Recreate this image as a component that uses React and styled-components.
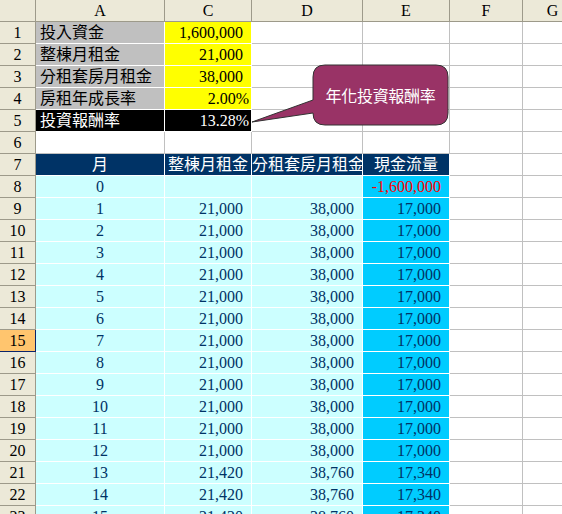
import React from "react";
import styled, { createGlobalStyle, css } from "styled-components";

const GlobalStyle = createGlobalStyle`
  html, body {
    margin: 0;
    padding: 0;
    background: #fff;
    overflow: hidden;
  }
  body {
    width: 562px;
    height: 514px;
  }
`;

const COLS = [
  { key: "A", width: 129 },
  { key: "C", width: 87 },
  { key: "D", width: 111 },
  { key: "E", width: 87 },
  { key: "F", width: 73 },
  { key: "G", width: 60 },
];

const inputs = [
  { n: 1, label: "投入資金", value: "1,600,000" },
  { n: 2, label: "整棟月租金", value: "21,000" },
  { n: 3, label: "分租套房月租金", value: "38,000" },
  { n: 4, label: "房租年成長率", value: "2.00%", pct: true },
];

const monthRows = [];
for (let m = 0; m <= 16; m++) {
  const grown = m > 12;
  monthRows.push({
    n: m + 8,
    month: m,
    whole: m === 0 ? "" : grown ? "21,420" : "21,000",
    split: m === 0 ? "" : grown ? "38,760" : "38,000",
    flow: m === 0 ? "-1,600,000" : grown ? "17,340" : "17,000",
  });
}

const Sheet = styled.div`
  position: relative;
  width: 562px;
  height: 514px;
  overflow: hidden;
  display: grid;
  grid-template-columns: 36px ${COLS.map(c => c.width + "px").join(" ")};
  grid-auto-rows: 22px;
  font-family: "Liberation Serif", "Noto Sans CJK TC", serif;
  font-size: 16px;
`;

const HeadCell = styled.div`
  box-sizing: border-box;
  background: #ece9d8;
  border-right: 1px solid #9d9a8a;
  border-bottom: 1px solid #9d9a8a;
  display: flex;
  align-items: center;
  justify-content: center;
  color: #000;
  line-height: 1;
  ${p =>
    p.$active &&
    css`
      background: #ffc56e;
      border-right-color: #0a246a;
      border-bottom-color: #0a246a;
    `}
`;

const Cell = styled.div`
  box-sizing: border-box;
  background: ${p => p.$fill || "#fff"};
  color: ${p => p.$ink || "#000"};
  border-right: 1px solid ${p => (p.$fill ? "#fff" : "#c0c0c0")};
  border-bottom: 1px solid ${p => (p.$fill ? "#fff" : "#c0c0c0")};
  display: flex;
  align-items: center;
  justify-content: ${p =>
    p.$align === "right" ? "flex-end" : p.$align === "center" ? "center" : "flex-start"};
  padding: 0 ${p => p.$padR ?? 0}px 0 ${p => p.$padL ?? 0}px;
  white-space: nowrap;
  overflow: hidden;
  line-height: 1;
`;

const Callout = styled.div`
  position: absolute;
  left: 250px;
  top: 60px;
  width: 202px;
  height: 70px;
`;

const CalloutShape = styled.svg`
  position: absolute;
  inset: 0;
`;

const CalloutText = styled.span`
  position: absolute;
  left: 63px;
  top: 5px;
  width: 135px;
  height: 60px;
  display: flex;
  align-items: center;
  justify-content: center;
  color: #fff;
  font-family: "Noto Sans CJK TC", sans-serif;
  font-size: 16px;
  letter-spacing: -0.3px;
`;

const NAVY = "#003366";
const AQUA = "#ccffff";
const SKY = "#00ccff";

const App = () => {
  return (
    <>
      <GlobalStyle />
      <Sheet>
        <HeadCell />
        {COLS.map(c => (
          <HeadCell key={c.key}>{c.key}</HeadCell>
        ))}

        {inputs.map(r => (
          <React.Fragment key={r.n}>
            <HeadCell>{r.n}</HeadCell>
            <Cell $fill="#c0c0c0" $padL={4}>
              {r.label}
            </Cell>
            <Cell $fill="#ffff00" $align="right" $padR={r.pct ? 2 : 8}>
              {r.value}
            </Cell>
            <Cell />
            <Cell />
            <Cell />
            <Cell />
          </React.Fragment>
        ))}

        <HeadCell>5</HeadCell>
        <Cell $fill="#000" $ink="#fff" $padL={4}>
          投資報酬率
        </Cell>
        <Cell $fill="#000" $ink="#fff" $align="right" $padR={2}>
          13.28%
        </Cell>
        <Cell />
        <Cell />
        <Cell />
        <Cell />

        <HeadCell>6</HeadCell>
        {COLS.map(c => (
          <Cell key={c.key} />
        ))}

        <HeadCell>7</HeadCell>
        <Cell $fill={NAVY} $ink="#fff" $align="center">
          月
        </Cell>
        <Cell $fill={NAVY} $ink="#fff" $align="center">
          整棟月租金
        </Cell>
        <Cell $fill={NAVY} $ink="#fff">
          分租套房月租金
        </Cell>
        <Cell $fill={NAVY} $ink="#fff" $align="center">
          現金流量
        </Cell>
        <Cell />
        <Cell />

        {monthRows.map(r => (
          <React.Fragment key={r.n}>
            <HeadCell $active={r.n === 15}>{r.n}</HeadCell>
            <Cell $fill={AQUA} $ink={NAVY} $align="center">
              {r.month}
            </Cell>
            <Cell $fill={AQUA} $ink={NAVY} $align="right" $padR={8}>
              {r.whole}
            </Cell>
            <Cell $fill={AQUA} $ink={NAVY} $align="right" $padR={8}>
              {r.split}
            </Cell>
            <Cell
              $fill={SKY}
              $ink={r.month === 0 ? "#ff0000" : NAVY}
              $align="right"
              $padR={8}
            >
              {r.flow}
            </Cell>
            <Cell />
            <Cell />
          </React.Fragment>
        ))}

        <Callout>
          <CalloutShape width="202" height="70" viewBox="0 0 202 70">
            <path
              d="M75 5 H186 Q198 5 198 17 V53 Q198 65 186 65 H75 Q63 65 63 53 V53 L2 62 L63 40 V17 Q63 5 75 5 Z"
              fill="#993366"
              stroke="#333"
              strokeWidth="1"
            />
          </CalloutShape>
          <CalloutText>年化投資報酬率</CalloutText>
        </Callout>
      </Sheet>
    </>
  );
};

export default App;
